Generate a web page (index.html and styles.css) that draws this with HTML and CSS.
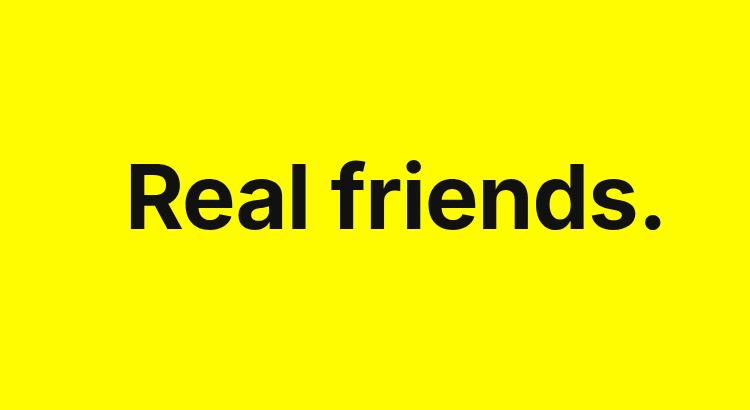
FILE: index.html
```html
<!DOCTYPE html>
<html>
<head>
<meta charset="utf-8">
<link rel="stylesheet" href="styles.css">
</head>
<body>
<main class="stage">
  <h1 class="headline">Real friends.</h1>
</main>
</body>
</html>
```
FILE: styles.css
```css
html, body {
  margin: 0;
  padding: 0;
  width: 750px;
  height: 410px;
  overflow: hidden;
  background: #fffc00;
}
.stage {
  width: 750px;
  height: 410px;
  display: flex;
  align-items: center;
  justify-content: flex-start;
  padding-left: 125px;
  padding-bottom: 16px;
  box-sizing: border-box;
}
.headline {
  margin: 0;
  font-family: Inter, "Liberation Sans", sans-serif;
  font-weight: 700;
  font-size: 90px;
  line-height: 1;
  letter-spacing: -1px;
  color: #111;
}
```
